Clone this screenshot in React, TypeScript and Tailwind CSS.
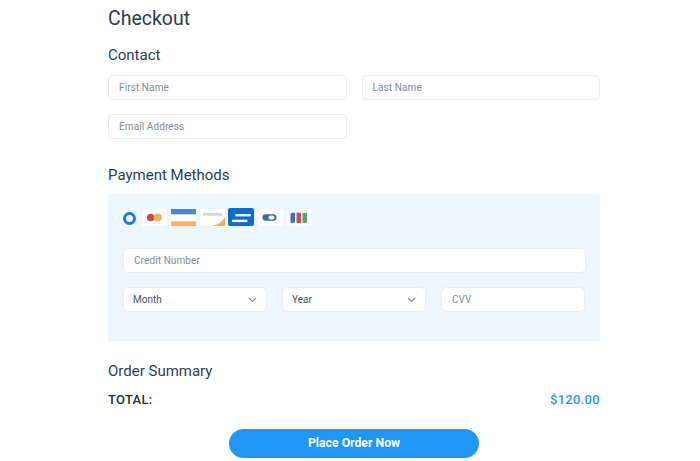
import React from "react";

function Field({ label, className = "" }: { label: string; className?: string }) {
  return (
    <div className={`flex h-[25px] items-center rounded-[5px] border border-[#eaedf1] bg-white pl-[10px] text-[10px] tracking-[0.1px] text-[#858c96] ${className}`}>
      {label}
    </div>
  );
}

function SelectBox({ label }: { label: string }) {
  return (
    <div className="flex h-[25px] items-center justify-between rounded-[5px] border border-[#eaedf1] bg-white pl-[9px] pr-[9px] text-[10px] text-[#4a515c]">
      <span>{label}</span>
      <svg width="9" height="6" viewBox="0 0 9 6" fill="none">
        <path d="M1 1l3.5 3.5L8 1" stroke="#858c96" strokeWidth="1.2" />
      </svg>
    </div>
  );
}

function Chip({ children, w = 24, className = "" }: { children: React.ReactNode; w?: number; className?: string }) {
  return (
    <svg width={w} height="18" viewBox={`0 0 ${w} 18`} className={`block ${className}`}>
      {children}
    </svg>
  );
}

export default function App() {
  return (
    <div className="h-[461px] w-[700px] overflow-hidden bg-white font-['Roboto',sans-serif]">
      <div className="ml-[108px] w-[492px]">
        <h1 className="pt-[6px] text-[19.5px] leading-[25px] text-[#2c3e50]">Checkout</h1>
        <h2 className="mt-[14px] text-[15px] leading-[20px] text-[#2c3e50]">Contact</h2>
        <div className="mt-[10px] grid grid-cols-2 gap-x-[15px] gap-y-[14px]">
          <Field label="First Name" />
          <Field label="Last Name" />
          <Field label="Email Address" />
        </div>
        <h2 className="mt-[26px] text-[15px] leading-[20px] text-[#2c3e50]">Payment Methods</h2>
        <div className="mt-[9px] h-[147px] bg-[#eef7ff] px-[15px] pt-[14px]">
          <div className="flex h-[20px] items-start">
            <span className="mt-[4px] h-[13px] w-[13px] rounded-full border-[3px] border-[#0d7fe8] bg-white" />
            <Chip w={25} className="ml-[6px]">
              <rect y="1" width="25" height="17" rx="2" fill="#fff" />
              <circle cx="8.7" cy="9.5" r="3.8" fill="#c0504d" />
              <circle cx="15.7" cy="9.5" r="4" fill="#f4b165" />
            </Chip>
            <Chip w={25} className="ml-[4px]">
              <rect y="1" width="25" height="17" fill="#fff" />
              <rect y="1" width="25" height="5.3" fill="#5083c8" />
              <rect y="13.3" width="25" height="4.7" fill="#f7b563" />
            </Chip>
            <Chip w={25} className="ml-[4px]">
              <rect y="1" width="25" height="17" rx="2" fill="#fff" />
              <rect x="3" y="5" width="19" height="2.7" fill="#d4d4d4" />
              <path d="M11 18C18 17 22 14 25 9v9z" fill="#f4b165" />
            </Chip>
            <Chip w={26} className="ml-[3px]">
              <rect width="26" height="18" rx="2" fill="#0a6ccb" />
              <rect x="7.3" y="6" width="15.4" height="2.4" fill="#fff" />
              <rect x="4" y="11.7" width="15.3" height="2.4" fill="#fff" />
            </Chip>
            <Chip w={25} className="ml-[4px]">
              <rect y="1" width="25" height="17" rx="2" fill="#fff" />
              <rect x="4.5" y="6.3" width="14" height="6.4" rx="3.2" fill="#3c6aa8" />
              <ellipse cx="13.5" cy="9.5" rx="3" ry="2" fill="#fff" />
            </Chip>
            <Chip w={24} className="ml-[4px]">
              <rect y="1" width="24" height="17" rx="2" fill="#fff" />
              <path d="M3.5 5.5q2-1 4.5-1v10q-2.5 0-4.5 .8z" fill="#3f73b0" />
              <path d="M9.5 4.5q2.500-.3 4.500 .5v10h-4.500z" fill="#c65454" />
              <path d="M15.500 5q2.500 .3 4.500-.5v10q-2 .8-4.500 .5z" fill="#5aa06c" />
            </Chip>
          </div>
          <Field label="Credit Number" className="mt-[20px] mr-[-1px]" />
          <div className="mt-[14px] grid grid-cols-3 gap-x-[15px]">
            <SelectBox label="Month" />
            <SelectBox label="Year" />
            <Field label="CVV" />
          </div>
        </div>
        <h2 className="mt-[20px] text-[15px] leading-[20px] text-[#2c3e50]">Order Summary</h2>
        <div className="mt-[9px] flex items-center justify-between text-[13px] font-medium leading-[20px] tracking-[0.3px]">
          <span className="text-[#2b2f36]">TOTAL:</span>
          <span className="text-[#2f94ee]">$120.00</span>
        </div>
        <div className="mt-[19px] flex justify-center">
          <button className="h-[29px] w-[250px] rounded-full bg-[#2196f3] text-[12.25px] font-bold text-white">
            Place Order Now
          </button>
        </div>
      </div>
    </div>
  );
}
